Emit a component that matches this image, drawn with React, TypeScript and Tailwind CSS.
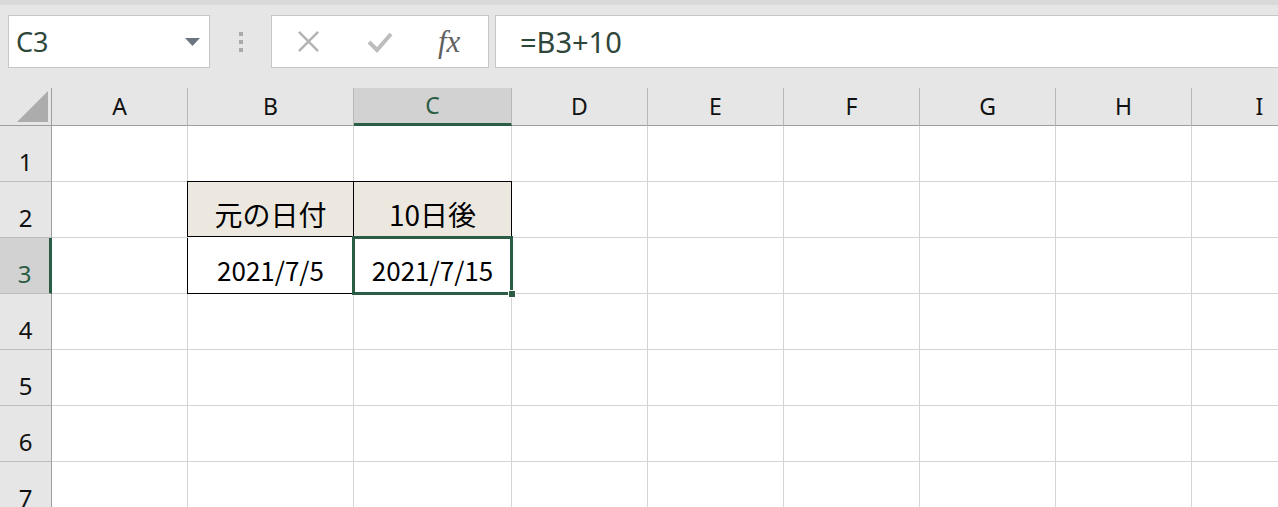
import React from 'react';

const COLS = ['A', 'B', 'C', 'D', 'E', 'F', 'G', 'H', 'I'];
const ROWS = [1, 2, 3, 4, 5, 6, 7];

const ui = { fontFamily: '"Noto Sans", "Open Sans", sans-serif' };
const jp = { fontFamily: '"Noto Sans CJK JP", "Noto Sans", sans-serif' };

// Table block in B2:C3
const cellContent: Record<string, string> = {
  B2: '元の日付',
  C2: '10日後',
  B3: '2021/7/5',
  C3: '2021/7/15',
};

function FormulaBar() {
  return (
    <div className="flex items-start h-[83px] pt-[10px] bg-[#e6e6e6]">
      {/* name box */}
      <div className="ml-2 w-[202px] h-[53px] bg-white border border-[#c6c6c6] flex items-center justify-between pl-[7px] pr-[9px]">
        <span className="text-[27px] text-[#2f463a] leading-none" style={ui}>C3</span>
        <svg width="15" height="8" viewBox="0 0 15 8">
          <path d="M0 0 H15 L7.5 8 Z" fill="#6b7580" />
        </svg>
      </div>
      {/* splitter dots */}
      <div className="w-[61px] h-[53px] flex flex-col items-center justify-center gap-[4px]">
        <div className="w-[4px] h-[4px] bg-[#aaaaaa]" />
        <div className="w-[4px] h-[4px] bg-[#aaaaaa]" />
        <div className="w-[4px] h-[4px] bg-[#aaaaaa]" />
      </div>
      {/* cancel / enter / fx */}
      <div className="w-[218px] h-[53px] bg-white border border-[#c6c6c6] flex items-center pl-[25px]">
        <svg width="23" height="23" viewBox="0 0 24 24">
          <path d="M2 2 L22 22 M22 2 L2 22" stroke="#b4b4b4" strokeWidth="2.6" />
        </svg>
        <svg className="ml-[47px]" width="26" height="22" viewBox="0 0 26 22">
          <path d="M2 11 L10 19 L24 3" stroke="#bdbdbd" strokeWidth="4" fill="none" />
        </svg>
        <span
          className="ml-[45px] text-[31px] italic text-[#606060] leading-none"
          style={{ fontFamily: '"Liberation Serif", "DejaVu Serif", serif' }}
        >
          fx
        </span>
      </div>
      {/* formula input */}
      <div className="ml-[6px] flex-1 h-[53px] bg-white border border-[#c6c6c6] border-r-0 flex items-center pl-[24px]">
        <span className="text-[29px] text-[#2f463a] leading-none" style={ui}>=B3+10</span>
      </div>
    </div>
  );
}

function Cell({ col, row }: { col: string; row: number }) {
  const key = `${col}${row}`;
  const text = cellContent[key];
  const inTable = (col === 'B' || col === 'C') && (row === 2 || row === 3);
  const head = inTable && row === 2;
  const selected = key === 'C3';

  let cls = 'relative h-[56px] flex items-end justify-center border-r border-b ';
  cls += inTable ? 'border-black ' : 'border-[#d4d4d4] ';
  cls += head ? 'bg-[#ede8df] pb-[8px] ' : 'bg-white pb-[10px] ';
  if (selected) cls += 'z-10 ';
  // table top edge and left edge
  if (inTable && row === 2) cls += 'border-t border-t-black -mt-px ';
  if (col === 'B' && inTable) cls += 'border-l border-l-black -ml-px ';

  return (
    <div className={cls}>
      {text && (
        <span className={`${head ? 'text-[28px]' : 'text-[26px]'} leading-none text-black`} style={jp}>
          {text}
        </span>
      )}
      {selected && (
        <>
          <div className="absolute -left-[2px] -top-[2px] -right-[2px] -bottom-[2px] border-[3px] border-[#2b5d45]" />
          <div className="absolute -right-[5px] -bottom-[5px] w-[8px] h-[8px] bg-[#2b5d45] border border-white" />
        </>
      )}
    </div>
  );
}

export default function App() {
  return (
    <div className="w-[1278px] h-[507px] overflow-hidden bg-white">
      <div className="h-[5px] bg-[#d9d9d9]" />
      <FormulaBar />
      <div className="grid grid-cols-[52px_136px_166px_158px_136px_136px_136px_136px_136px_136px] w-max">
        {/* corner */}
        <div className="h-[38px] bg-[#e6e6e6] border-r border-b border-[#9e9e9e] flex items-end justify-end pr-[3px] pb-[3px]">
          <svg width="31" height="31" viewBox="0 0 31 31">
            <path d="M31 0 V31 H0 Z" fill="#acacac" />
          </svg>
        </div>
        {COLS.map((c) => (
          <div
            key={c}
            className={`h-[38px] flex items-center justify-center border-r border-[#b8b8b8] text-[23px] ${
              c === 'C'
                ? 'bg-[#d2d2d2] text-[#2b5d45] border-b-[3px] border-b-[#2b5d45]'
                : 'bg-[#e6e6e6] text-[#111111] border-b border-b-[#9e9e9e]'
            }`}
            style={ui}
          >
            {c}
          </div>
        ))}

        {ROWS.map((r) => (
          <React.Fragment key={r}>
            <div
              className={`h-[56px] flex items-end justify-center pb-[7px] border-b border-b-[#bdbdbd] text-[24px] leading-none ${
                r === 3
                  ? 'bg-[#d2d2d2] text-[#2b5d45] border-r-[3px] border-r-[#2b5d45]'
                  : 'bg-[#e6e6e6] text-[#111111] border-r border-r-[#9e9e9e]'
              }`}
              style={ui}
            >
              {r}
            </div>
            {COLS.map((c) => (
              <Cell key={c} col={c} row={r} />
            ))}
          </React.Fragment>
        ))}
      </div>
    </div>
  );
}
